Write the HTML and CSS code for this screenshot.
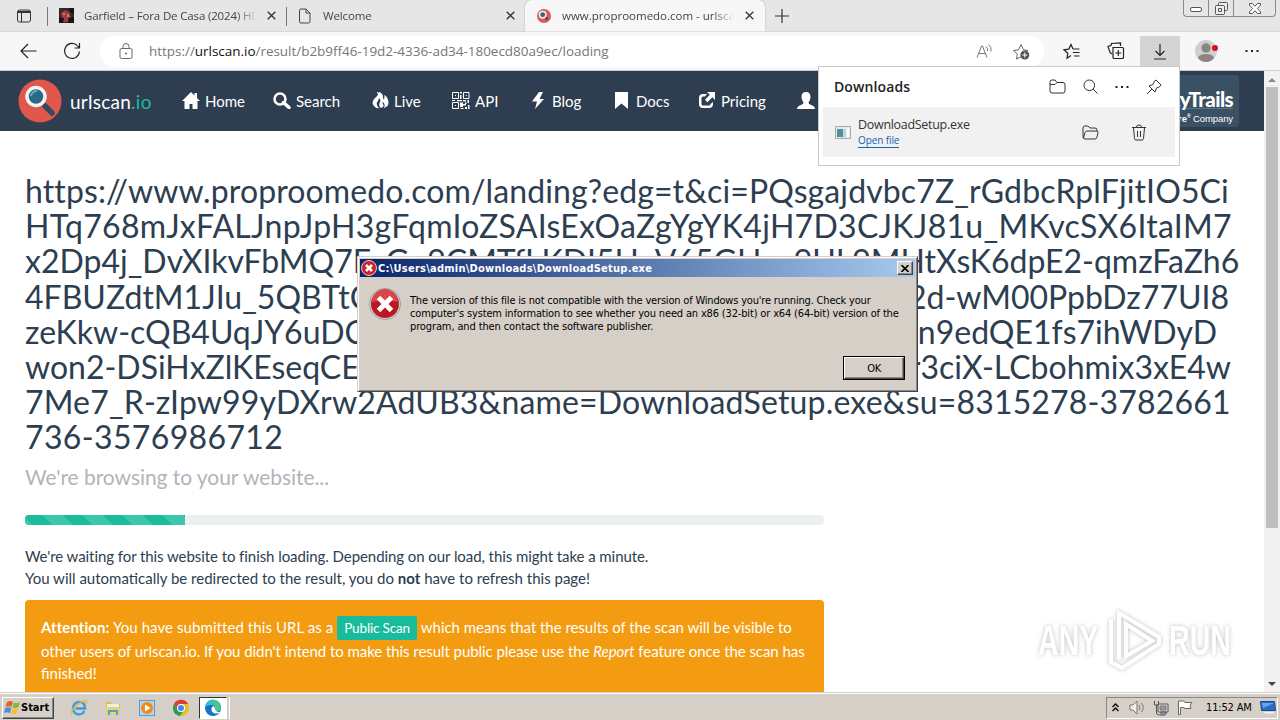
FILE: index.html
```
<!DOCTYPE html>
<html lang="en">
<head>
    <meta charset="UTF-8">
    <meta name="viewport" content="width=device-width, initial-scale=1.0">
    <title>www.proproomedo.com - urlscan.io</title>
    <link rel="stylesheet" href="styles.css">
</head>
<body>
    <div class="tabs">
        <svg class="tab-menu" width="16" height="16" viewBox="0 0 16 16"><rect x="1.5" y="2" width="13" height="12" rx="2" fill="none" stroke="#333"/><path d="M2 3h12v2H2z" fill="#333"/><path d="M5.500 5v9" stroke="#333"/></svg>
        <div class="tab tab-one">
            <svg width="15" height="15" viewBox="0 0 15 15"><path fill="#30282a" d="M0 0h15v15H0z"/><path fill="#a33b36" d="M2 5l4-3 4 2 2 5-4 5H3z"/><path fill="#151515" d="M0 9l5 1-1 5H0zM10 0h5v6l-4-2zM9 10l6-1v6h-5z"/><path fill="#d67363" d="M4 5h2v2H4zM8 6h2v3H8z"/></svg>
            <span class="tab-name">Garfield – Fora De Casa (2024) HD</span>
            <svg class="close" width="9" height="9" viewBox="0 0 9 9"><path d="M.7.7l7.600 7.600M8.300.7L.7 8.300"/></svg>
        </div>
        <div class="tab tab-two">
            <svg width="14" height="16" viewBox="0 0 14 16" fill="none" stroke="#444"><path d="M3 1h5l4 4v8.500a1.500 1.500 0 0 1-1.500 1.500H3a1.500 1.500 0 0 1-1.500-1.500v-11A1.500 1.500 0 0 1 3 1zM8 1v4h4"/></svg>
            <span class="tab-name">Welcome</span>
            <svg class="close" width="9" height="9" viewBox="0 0 9 9"><path d="M.7.7l7.600 7.600M8.300.7L.7 8.300"/></svg>
        </div>
        <div class="tab tab-three">
            <svg width="14" height="14" viewBox="0 0 44 44"><circle cx="22" cy="22" r="22" fill="#e2574c"/><path d="M24 24l9 9" stroke="#324a5e" stroke-width="7"/><circle cx="18" cy="18" r="10" fill="#2b6a7c" stroke="#eee" stroke-width="5"/></svg>
            <span class="tab-name">www.proproomedo.com - urlsca</span>
            <svg class="close" width="9" height="9" viewBox="0 0 9 9"><path d="M.7.7l7.600 7.600M8.300.7L.7 8.300"/></svg>
        </div>
        <svg class="plus" width="14" height="14" viewBox="0 0 14 14"><path d="M7 0v14M0 7h14" stroke="#333" stroke-width="1.200"/></svg>
        <div class="win-buttons">
            <span><svg width="12" height="5" viewBox="0 0 12 5"><rect x=".5" y=".5" width="11" height="4" rx="1.500" fill="#fff" stroke="#555"/></svg></span>
            <span><svg width="13" height="13" viewBox="0 0 13 13" fill="#eee" stroke="#555"><rect x="3.500" y=".5" width="9" height="8" rx="1"/><rect x=".5" y="3.500" width="9" height="9" rx="1"/><path d="M3.500 6.500h3v3h-3z"/></svg></span>
            <span><svg width="12" height="11" viewBox="0 0 12 11"><path d="M.5.5h3L6 3.300 8.500.5h3v1.700L8.300 5.500l3.200 3.200v1.800h-3L6 7.700l-2.500 2.800h-3V8.700l3.200-3.200L.5 2.200z" fill="#fff" stroke="#555"/></svg></span>
        </div>
    </div>

    <div class="toolbar">
        <svg class="back" width="17" height="16" viewBox="0 0 17 16"><path d="M16.500 8H1M8 1L1 8l7 7"/></svg>
        <svg class="reload" width="18" height="18" viewBox="0 0 18 18"><path d="M16.500 9.500a7.500 7.500 0 1 1-2-5.700l2 2M16.500 1v5h-5"/></svg>
        <div class="address">
            <svg class="lock" width="14" height="17" viewBox="0 0 14 17" fill="none" stroke="#666"><rect x="1" y="5.500" width="12" height="10" rx="1.500"/><path d="M4 5V3.500a3 3 0 0 1 6 0V5"/><path d="M6.500 10h1v1h-1z"/></svg>
            <span class="url">https://<b>urlscan.io</b>/result/b2b9ff46-19d2-4336-ad34-180ecd80a9ec/loading</span>
            <svg class="read" width="17" height="16" viewBox="0 0 17 16" fill="none" stroke="#777"><path d="M1 14.500L5.500 3h1L11 14.500M2.800 10.500h6.500M10 3.500q2 1.500 1.500 4.500M12.500 1.500q3.500 2.500 2.500 7"/></svg>
            <svg class="fav" width="18" height="17" viewBox="0 0 18 17" fill="none" stroke="#666"><path d="M9 14l-4.500 2 .8-5L1.500 7.500 6.500 6.800 9 1.500l2.500 5.300 4.500.7"/><circle cx="12.800" cy="12" r="4.500" fill="#555" stroke="none"/><path d="M12.800 9.500v5M10.300 12h5" stroke="#fff"/></svg>
        </div>
        <svg class="tool favs" width="18" height="17" viewBox="0 0 18 17"><path d="M8 12.500l-4 2.800.8-5L1 6.800l4.800-.7L8 1.500l2 4.500M10 6h6.500M10 9.500h6.500M11 13h5.500"/></svg>
        <svg class="tool" width="18" height="18" viewBox="0 0 18 18"><path d="M5 12l-2-1.500L1 4.500l3-1 .5-2 9-.5v3M6 5.500h9.500q1 0 1 1v9q0 1-1 1H7q-1 0-1-1zM11.300 8v6M8.300 11h6"/></svg>
        <div class="dl-button"><svg width="14" height="17" viewBox="0 0 14 17"><path d="M7 1v11.500M2.500 8L7 12.500 11.500 8M1 16h12"/></svg></div>
        <svg class="avatar" width="23" height="22" viewBox="0 0 23 22"><circle cx="11" cy="11" r="11" fill="#cfcfcf"/><circle cx="11" cy="8" r="4.700" fill="#8b8683"/><path d="M3 18q1-4 8-4t8 4q-3 4-8 4t-8-4z" fill="#8b8683"/><circle cx="20" cy="8" r="3" fill="#d8101c"/></svg>
        <svg class="more" width="14" height="4" viewBox="0 0 14 4"><path d="M.5 1h2v2h-2zM6 1h2v2H6zM11.500 1h2v2h-2z"/></svg>
    </div>

    <div class="view">
        <div class="page">
            <nav>
                <div class="brand">
                    <svg width="44" height="44" viewBox="0 0 44 44"><circle cx="22" cy="22" r="21.500" fill="#e2574c"/><path d="M24 24l3 3" stroke="#eee" stroke-width="3"/><path d="M27 27l7 7" stroke="#324a5e" stroke-width="5.500" stroke-linecap="round"/><circle cx="18" cy="17.500" r="9" fill="#2b6a85" stroke="#f2f2f2" stroke-width="3.500"/><path d="M13 17q1-5 6-5" fill="none" stroke="#77a8b8" stroke-width="2"/></svg>
                    <span>urlscan<i>.io</i></span>
                </div>
                <div class="links">
                    <a><svg width="18" height="17" viewBox="0 0 18 17"><path d="M9 0L0 9h2.500v8h5v-5h3v5h5V9H18l-3-3V1h-2.500v2.500z"/></svg>Home</a>
                    <a><svg width="18" height="17" viewBox="0 0 18 17"><path d="M10.500 10.500L16 15.500" stroke="#fff" stroke-width="3.500" stroke-linecap="round"/><circle cx="7" cy="7" r="5.500" fill="none" stroke="#fff" stroke-width="2.500"/></svg>Search</a>
                    <a><svg width="17" height="17" viewBox="0 0 17 17"><path d="M6 0q1 3-3 6-5 5 0 9 2 2 4 1-4-4-1-7l1-3q2 2 1 4-2 4 1 6 4-1 2-4l-1-2q4 1 2 6 6-2 4-8-1-4-4-5 1 2 0 4-1 1-1-2 0-4-4-5-2 3-2 0z"/></svg>Live</a>
                    <a><svg width="18" height="17" viewBox="0 0 18 17"><path d="M.5.5h6v6h-6zM11.500.5h5.500v6h-5.500zM.5 10.500h6v6h-6z" fill="none" stroke="#fff"/><path d="M3 3h1v1H3zM13.700 3h1v1h-1zM3 13h1v1H3zM8 0h2v1.500H8zM8 3h1.500v4H8zM0 8h3v1H0zM5 8h5v1.200H5zM11 8h3v1.500h-3zM15.500 8H17v3h-1.500zM8 10.500h3V12h3v1.500h-3V15H8zM13 10.500h1.500V12H13zM8.500 16h3v1h-3zM13 15h2v2h-2zM16 13h1.500v4H16z"/></svg>API</a>
                    <a><svg class="narrow" width="12" height="17" viewBox="0 0 12 17"><path d="M7 0L0 9.500h5L3 17l9-10H7.500L11 0z"/></svg>Blog</a>
                    <a><svg class="narrow" width="13" height="17" viewBox="0 0 13 17"><path d="M0 0h13v17l-6.500-5.500L0 17z"/></svg>Docs</a>
                    <a><svg class="share" width="17" height="17" viewBox="0 0 17 17"><path d="M9 2H5Q1 2 1 6v6q0 4 4 4h6q4 0 4-4v-2l-2.500 2q0 1.500-1.500 1.500H5q-1.500 0-1.500-1.500V6Q3.500 4.500 5 4.500h2zM9 0h8v8l-2.700-2.700-4.800 4.900-2.500-2.500 4.800-4.900z"/></svg>Pricing</a>
                    <a><svg width="18" height="17" viewBox="0 0 18 17"><path d="M9 0q4.500 0 4.500 5 0 3-2 5.500 0 1.500 2 2.200 4.500 1.300 4.500 4.300H0q0-3 4.500-4.300 2-.7 2-2.200-2-2.500-2-5.500 0-5 4.500-5z"/></svg></a>
                </div>
                <div class="trails"><strong>SecurityTrails</strong><span><b>A Recorded Future<sup>®</sup></b> Company</span></div>
            </nav>
            <div class="content">
                <h1>
                    <span class="row r1">https://www.proproomedo.com/landing?edg=t&amp;ci=PQsgajdvbc7Z_rGdbcRplFjitIO5Ci</span>
                    <span class="row r2">HTq768mJxFALJnpJpH3gFqmIoZSAIsExOaZgYgYK4jH7D3CJKJ81u_MKvcSX6ItaIM7</span>
                    <span class="row r3"><span>x2Dp4j_DvXIkvFbMQ7E_Go9CMTfLKDI5HuV65GHu</span><span>_9UL9MHtXsK6dpE2-qmzFaZh6</span></span>
                    <span class="row r4"><span>4FBUZdtM1JIu_5QBTtC</span><span>2d-wM00PpbDz77UI8</span></span>
                    <span class="row r5"><span>zeKkw-cQB4UqJY6uDC</span><span>n9edQE1fs7ihWDyD</span></span>
                    <span class="row r6"><span>won2-DSiHxZlKEseqCE</span><span>r3ciX-LCbohmix3xE4w</span></span>
                    <span class="row r7">7Me7_R-zIpw99yDXrw2AdUB3&amp;name=DownloadSetup.exe&amp;su=8315278-3782661</span>
                    <span class="row r8">736-3576986712</span>
                </h1>
                <p class="lead">We're browsing to your website...</p>
                <div class="progress"><div class="bar"></div></div>
                <p class="wait"><span>We're waiting for this website to finish loading. Depending on our load, this might take a minute.</span><br>You will automatically be redirected to the result, you do <b>not</b> have to refresh this page!</p>
                <div class="alert"><span class="intro"><b>Attention:</b> You have submitted this URL as a</span> <span class="label">Public Scan</span> <span class="means">which means that the results of the scan will be visible to</span><br><span class="users">other users of urlscan.io. If you didn't intend to make this result public please use the <em>Report</em> feature once the scan has</span><br>finished!</div>
            </div>
        </div>
        <div class="scrollbar">
            <svg width="8" height="4" viewBox="0 0 8 4"><path d="M0 4l4-4 4 4z" fill="#8a8a8a"/></svg>
            <div class="thumb"></div>
            <svg width="8" height="4" viewBox="0 0 8 4"><path d="M0 0l4 4 4-4z" fill="#444"/></svg>
        </div>
    </div>

    <div class="taskbar">
        <button class="start"><svg width="17" height="15" viewBox="0 0 17 15"><path d="M3 2q3-2 6 0L7.500 7q-3-1.500-6 0z" fill="#e8632b"/><path d="M10 2.500q3 1.500 6-.5L14.500 7q-3 2-6 .5z" fill="#7fb83a"/><path d="M1.300 8q3-1.500 6 0L6 13q-3-1.500-6 0z" fill="#4a8fd8"/><path d="M8.300 8.500q3 1.500 6-.5L13 13q-3 2-6 .5z" fill="#f8c128"/></svg>Start</button>
        <div class="apps">
            <svg width="18" height="18" viewBox="0 0 18 18"><path d="M14.500 12q-2 3.500-5.500 3.500-6-.5-6-6.500 1-6 6.500-6t5.500 6.500H5.500" fill="none" stroke="#3b9fd8" stroke-width="2.400"/><path d="M2 16q-3-2 3-8t11-6.500Q18 2 16 5" fill="none" stroke="#e3bc4b" stroke-width="1.300"/></svg>
            <svg width="18" height="18" viewBox="0 0 18 18"><path d="M2 3h5l1 2h8v11H2z" fill="#d9bd5c"/><path d="M3 5h12v4H3z" fill="#eef1dc"/><path d="M2 8h14v8H2z" fill="#ecd077"/><path d="M4 16v-5h10v5h-2v-3H6v3z" fill="#4ba3d6"/></svg>
            <svg width="18" height="18" viewBox="0 0 18 18"><rect x="1.500" y="1.500" width="15" height="15" fill="#b3d5ed" stroke="#5a9bce"/><circle cx="9" cy="9" r="6" fill="#f18a1d"/><path d="M7 5.500v7L12.500 9z" fill="#fff"/></svg>
            <svg width="18" height="18" viewBox="0 0 18 18"><circle cx="9" cy="9" r="8" fill="#eabf26"/><path d="M9 9L2 5a8 8 0 0 0 6 12l4-6z" fill="#2c9f52"/><path d="M9 9V5h7A8 8 0 0 0 2 5l3.500 5z" fill="#d93e35"/><circle cx="9" cy="9" r="4" fill="#fff"/><circle cx="9" cy="9" r="3" fill="#4285f4"/></svg>
            <div class="active-app"><svg width="18" height="18" viewBox="0 0 18 18"><circle cx="9" cy="9" r="8" fill="#1672c8"/><path d="M1 9a8 8 0 0 1 16-1q0 4-4 4-3 0-2-2 1-4-4-4-5 0-6 3z" fill="#36bdd0"/><path d="M8 1.200A8 8 0 0 1 17 8q0 4-4 4-3 0-2-2 1-3-2-5z" fill="#4fcb78" opacity=".75"/><path d="M8 8q-2 5 3 6.500 3 .5 5-1.500-4 .5-5-3 0-2-1.500-3z" fill="#fff"/></svg></div>
        </div>
        <div class="tray">
            <svg width="7" height="9" viewBox="0 0 7 9" fill="none" stroke="#111" stroke-width="1.500"><path d="M.5 4l3-3 3 3M.5 8l3-3 3 3"/></svg>
            <svg class="sound" width="17" height="15" viewBox="0 0 17 15" fill="#eee" stroke="#777"><path d="M1 5h3l4-4v13l-4-4H1z"/><path d="M10 5q2 2.500 0 5M12.500 3q3.500 4.500 0 9" fill="none"/></svg>
            <svg class="net" width="16" height="16" viewBox="0 0 16 16" fill="#ddd" stroke="#555"><path d="M5 4h10v8H5zM8 12h5v2H8z"/><path d="M1.500 1v4h4V1M3.500 5v8q0 2 3 2h6" fill="none"/><path d="M7 6h6v4H7z" fill="#999" stroke="#777"/></svg>
            <svg class="flag" width="16" height="15" viewBox="0 0 16 15" fill="#fff" stroke="#666"><path d="M1.500 14.500V1h5q1 2 4 1.500h4.500L13 5.500l1 3H8Q7 7 3.500 7.500v7z"/></svg>
            <span class="clock">11:52 AM</span>
            <svg class="desk" width="16" height="13" viewBox="0 0 16 13"><path d="M.5.5h14l1 9H1.500z" fill="#276cc7" stroke="#174b91"/><path d="M2 2h12L3 7z" fill="#62a5ec"/><path d="M4 11h9l2 1.500H5z" fill="#f3f3f3"/></svg>
        </div>
    </div>

    <!-- downloads flyout -->
    <div class="downloads">
        <div class="dl-head">
            <h2>Downloads</h2>
            <svg width="17" height="15" viewBox="0 0 17 15"><path d="M1 3q0-2 2-2h3l2 2.500h6q2 0 2 2V12q0 2-2 2H3q-2 0-2-2zM1 5.500h5l2-2"/></svg>
            <svg width="15" height="15" viewBox="0 0 15 15"><circle cx="6.300" cy="6.300" r="5.300"/><path d="M10 10l4.500 4.500"/></svg>
            <svg class="more" width="14" height="4" viewBox="0 0 14 4"><path d="M.5 1h2v2h-2zM6 1h2v2H6zM11.500 1h2v2h-2z"/></svg>
            <svg width="16" height="16" viewBox="0 0 16 16"><path d="M10 1l5 5-1 1.500-3.500 1.500L9 13 3 7l4-1.500L8.500 2zM6 10l-5 5"/></svg>
        </div>
        <div class="dl-item">
            <svg class="exe" width="16" height="14" viewBox="0 0 16 14"><path d="M.5 1.500h15v12H.5z" fill="#e6eae8" stroke="#aaa"/><path d="M2 4h6v8H2z" fill="#4e9295"/><path d="M8.500 4H11v8H8.500z" fill="#b5d2e0"/><path d="M11.500 4H14v8h-2.500z" fill="#fff"/></svg>
            <div class="dl-text"><span>DownloadSetup.exe</span><a>Open file</a></div>
            <svg class="open" width="17" height="15" viewBox="0 0 17 15"><path d="M3 14q-2 0-2-2V3q0-2 2-2h3l2 2h5q2 0 2 2v1.500M1.500 13L3 7.500Q3.500 6 5 6h9.500q1.500 0 1.500 1.500L15 12q-.5 2-2 2H3"/></svg>
            <svg class="bin" width="16" height="17" viewBox="0 0 16 17"><path d="M1 3.500h14M5.500 3q0-2 2.500-2t2.500 2M2.500 4l1 10.500q.2 1.500 1.500 1.500h6q1.300 0 1.500-1.500L13.500 4M6.500 7v6M9.500 7v6"/></svg>
        </div>
    </div>

    <!-- error message window -->
    <div class="dialog">
        <div class="title">
            <svg width="16" height="16" viewBox="0 0 32 32"><circle cx="16" cy="16" r="15" fill="#c9262b" stroke="#e0d0d0" stroke-width="2"/><path d="M10 10l12 12M22 10L10 22" stroke="#fff" stroke-width="5"/></svg>
            <span>C:\Users\admin\Downloads\DownloadSetup.exe</span>
            <button class="x"><svg width="8" height="7" viewBox="0 0 8 7"><path d="M.5 0l7 7M7.500 0l-7 7" stroke="#000" stroke-width="1.600"/></svg></button>
        </div>
        <div class="message">
            <svg width="32" height="32" viewBox="0 0 32 32"><circle cx="16" cy="16" r="15.500" fill="#ddd" stroke="#999"/><circle cx="16" cy="16" r="14" fill="#b81922"/><path d="M3 14a13 13 0 0 1 26 0q-13-3-26 0z" fill="#d9464a"/><path d="M9.500 9.500l13 13M22.500 9.500l-13 13" stroke="#fff" stroke-width="5"/></svg>
            <p><span class="m1">The version of this file is not compatible with the version of Windows you're running. Check your</span><span class="m2">computer's system information to see whether you need an x86 (32-bit) or x64 (64-bit) version of the</span><span class="m3">program, and then contact the software publisher.</span></p>
        </div>
        <button class="ok">OK</button>
    </div>

    <!-- watermark -->
    <div class="watermark">
        <span>ANY</span>
        <svg width="58" height="64" viewBox="0 0 58 64" fill="none" stroke="#fff" stroke-width="4"><path d="M12 50V4l40 24v7L15 59l-11-6V10"/><path d="M19 15v32l26-15z"/></svg>
        <span>RUN</span>
    </div>
</body>
</html>
```
FILE: styles.css
```
*{
    margin: 0;
    padding: 0;
    box-sizing: border-box;
}
body{
    width: 1280px;
    height: 720px;
    overflow: hidden;
    display: flex;
    flex-direction: column;
    position: relative;
    background-color: #fff;
    font-family: "Open Sans", "Noto Sans", sans-serif;
}
svg{
    flex-shrink: 0;
    display: block;
}
/* tabs */
.tabs{
    height: 32px;
    flex-shrink: 0;
    display: flex;
    align-items: center;
    background-color: #e6e6e6;
    border-bottom: 1px solid #d8d8d8;
    font-size: 12px;
    color: #444;
}
.tab-menu{
    margin: 0 7px 0 16px;
}
.tab{
    height: 32px;
    display: flex;
    align-items: center;
}
.tab-one{
    width: 247px;
    padding-left: 20px;
}
.tab-two{
    width: 239px;
    padding-left: 12px;
}
.tab-three{
    width: 240px;
    padding-left: 12px;
    background-color: #f7f7f7;
    border-radius: 7px 7px 0 0;
    box-shadow: 0 0 2px #aaa;
    clip-path: inset(-3px -3px 0 -3px);
}
.tab-one, .tab-two{
    background: linear-gradient(#777, #777) no-repeat 0 7px / 1px 19px;
}
.tab-one{
    background-position: 8px 7px;
}
.tab-name{
    flex: 1;
    margin-left: 11px;
    overflow: hidden;
    white-space: nowrap;
    font-size: 11.5px;
    letter-spacing: -.15px;
    -webkit-mask-image: linear-gradient(to right, #000 88%, transparent);
}
.tab-one .tab-name{
    margin-left: 10px;
}
.tab-three .tab-name{
    letter-spacing: 0;
}
.close{
    margin: 0 10px 0 11px;
    stroke: #333;
    stroke-width: 1.3;
}
.tab-one .close{
    margin: 0 10px;
}
.tab-three .close{
    margin: 0 11px;
}
.plus{
    margin-left: 10px;
}
.win-buttons{
    display: flex;
    align-self: flex-start;
    height: 17px;
    width: 93px;
    margin-left: auto;
    margin-right: 4px;
    border: 1px solid #8a8a8a;
    border-top: none;
    border-radius: 0 0 4px 4px;
}
.win-buttons span{
    flex: 25;
    display: flex;
    align-items: center;
    justify-content: center;
}
.win-buttons span:first-child{
    padding-top: 3px;
}
.win-buttons span + span{
    border-left: 1px solid #8a8a8a;
}
.win-buttons span:last-child{
    flex: 42;
}
/* toolbar */
.toolbar{
    height: 39px;
    flex-shrink: 0;
    display: flex;
    align-items: center;
    background-color: #f7f7f7;
    border-bottom: 1px solid #c3cdd3;
}
.toolbar > svg, .dl-button svg{
    fill: none;
    stroke: #222;
    stroke-width: 1.2;
}
.toolbar .more, .dl-head .more{
    fill: #222;
    stroke: none;
}
.back{
    margin-left: 20px;
}
.reload{
    margin: 0 19px 0 26px;
}
.address{
    width: 944px;
    height: 31px;
    padding: 0 14px 0 19px;
    display: flex;
    align-items: center;
    background-color: #fff;
    border-radius: 15px;
}
.url{
    flex: 1;
    margin-left: 16px;
    font-size: 13.5px;
    letter-spacing: -.03px;
    color: #777;
    white-space: nowrap;
}
.url b{
    font-weight: 400;
    color: #111;
}
.read{
    margin-right: 19px;
}
.favs{
    margin-left: 19px;
}
.favs + .tool{
    margin: 0 15px 0 26px;
}
.dl-button{
    width: 40px;
    height: 31px;
    margin-right: 15px;
    display: flex;
    align-items: center;
    justify-content: center;
    background-color: #d4d4d4;
}
.toolbar .avatar{
    margin-right: 27px;
    stroke: none;
}
/* page */
.view{
    flex: 1;
    min-height: 0;
    display: flex;
}
.page{
    width: 1264px;
    overflow: hidden;
    font-family: Lato, sans-serif;
    color: #2c3e50;
}
nav{
    height: 60px;
    padding-left: 18px;
    display: flex;
    align-items: center;
    background-color: #2e3d50;
    color: #fff;
}
.brand{
    width: 164px;
    display: flex;
    align-items: center;
    gap: 8px;
    font-size: 19px;
    letter-spacing: .25px;
}
.brand i{
    font-style: normal;
    color: #1abc9c;
}
.links{
    display: grid;
    grid-template-columns: 91px 99px 80px 80px 83px 83px 99px 20px;
    font-size: 15px;
    fill: #fff;
}
.links a{
    display: flex;
    align-items: center;
    gap: 5px;
}
.links svg{
    margin-top: -2px;
}
.links .narrow{
    margin-right: 3px;
}
.links .share{
    margin-right: 1px;
}
.trails{
    width: 130px;
    height: 52px;
    margin-left: auto;
    margin-right: 25px;
    padding: 12px 6px 0 0;
    display: flex;
    flex-direction: column;
    align-items: flex-end;
    white-space: nowrap;
    background-color: #3a5163;
    border-radius: 3px;
    font-family: "Liberation Sans", sans-serif;
}
.trails strong{
    height: 22px;
    border-bottom: 1px solid #5a7587;
    font: 900 20.5px/24px Lato, sans-serif;
    letter-spacing: -.6px;
}
.trails span{
    font-size: 9.5px;
    line-height: 14px;
    letter-spacing: -.1px;
}
.trails sup{
    font-size: 5px;
}
.content{
    padding: 42px 25px 0;
}
h1{
    font-size: 32px;
    font-weight: 400;
    line-height: 35.2px;
}
.row{
    display: flex;
    justify-content: space-between;
    white-space: nowrap;
}
.r1{
    letter-spacing: .11px;
}
.r2{
    letter-spacing: .28px;
}
.r3{
    width: 1213px;
}
.r4{
    width: 1204px;
}
.r5{
    width: 1192px;
}
.r6{
    width: 1206px;
}
.r7{
    letter-spacing: .17px;
}
.r8{
    letter-spacing: .36px;
}
.lead{
    margin-top: 7px;
    font-size: 21px;
    letter-spacing: -.05px;
    line-height: 30px;
    color: #b0b5b8;
}
.progress{
    width: 799px;
    height: 10px;
    margin-top: 23px;
    background-color: #ecf0f1;
    border-radius: 4px;
    overflow: hidden;
}
.bar{
    width: 160px;
    height: 10px;
    background: linear-gradient(45deg, rgba(255,255,255,.15) 25%, transparent 25%, transparent 50%, rgba(255,255,255,.15) 50%, rgba(255,255,255,.15) 75%, transparent 75%) 18px 0 / 40px 40px #1abc9c;
}
.wait{
    margin-top: 20px;
    font-size: 15px;
    line-height: 22px;
    white-space: nowrap;
}
.wait span{
    letter-spacing: -.07px;
}
.alert{
    width: 799px;
    height: 120px;
    margin-top: 11px;
    padding: 16px;
    background-color: #f39c12;
    border-radius: 4px;
    color: #fff;
    font-size: 15px;
    line-height: 22.5px;
    white-space: nowrap;
}
.intro{
    letter-spacing: .08px;
}
.means{
    letter-spacing: -.04px;
}
.users{
    letter-spacing: -.06px;
}
.label{
    display: inline-block;
    padding: 0 7px;
    height: 24px;
    line-height: 24px;
    background-color: #18bc9c;
    border-radius: 2px;
    font-size: 13.5px;
    letter-spacing: -.15px;
}
.scrollbar{
    width: 16px;
    padding: 7px 2px 6px;
    display: flex;
    flex-direction: column;
    align-items: center;
    background-color: #f1f1f1;
}
.thumb{
    width: 12px;
    height: 441px;
    margin: 5px 0 auto;
    background-color: #bfbfbf;
}
/* taskbar */
.taskbar{
    height: 28px;
    flex-shrink: 0;
    display: flex;
    align-items: center;
    padding: 2px 2px 0;
    background-color: #d5cfc8;
    border-top: 1px solid #d5cfc8;
    box-shadow: inset 0 1px #fff;
    font-family: "DejaVu Sans Condensed", "DejaVu Sans", sans-serif;
}
.start{
    width: 52px;
    height: 22px;
    display: flex;
    align-items: center;
    padding-left: 1px;
    background-color: #d5cfc8;
    border: 1px solid;
    border-color: #fff #444 #444 #fff;
    box-shadow: inset -1px -1px #888;
    font: bold 11px "DejaVu Sans Condensed", "DejaVu Sans", sans-serif;
}
.apps{
    display: flex;
    align-items: center;
    gap: 16px;
    margin-left: 16px;
}
.active-app{
    width: 28px;
    height: 22px;
    margin-left: -7px;
    padding: 1px 0 0 4px;
    background-color: #fff;
    border: 1px solid;
    border-color: #333 #fff #fff #333;
    box-shadow: 2px 0 #d5cfc8, 3px 0 #fff;
}
.tray{
    width: 172px;
    height: 22px;
    margin-left: auto;
    display: flex;
    align-items: center;
    padding-left: 5px;
    border: 1px solid;
    border-color: #888 #fff #fff #888;
    font-size: 11px;
}
.sound{
    margin: 0 7px 0 10px;
}
.net{
    margin-right: 8px;
}
.clock{
    width: 54px;
    white-space: nowrap;
    margin-left: 13px;
    letter-spacing: -.15px;
}
/* downloads */
.downloads{
    position: absolute;
    left: 818px;
    top: 66px;
    width: 362px;
    height: 100px;
    background-color: #fff;
    border: 1px solid #c8c8c8;
}
.dl-head{
    height: 40px;
    padding: 0 17px 1px 15px;
    display: flex;
    align-items: center;
    gap: 17px;
}
.dl-head svg, .open, .bin{
    fill: none;
    stroke: #333;
}
h2{
    flex: 1;
    font-size: 14px;
    font-weight: 600;
    letter-spacing: .1px;
    color: #222;
}
.dl-item{
    height: 50px;
    margin: 0 4px;
    padding: 0 28px 0 12px;
    display: flex;
    align-items: center;
    background-color: #f1f1f1;
}
.dl-text{
    flex: 1;
    margin-left: 7px;
    font-size: 12.5px;
    letter-spacing: -.3px;
    line-height: 17px;
    color: #333;
}
.dl-text span{
    display: block;
}
.dl-text a{
    display: block;
    width: 41px;
    height: 15px;
    white-space: nowrap;
    font-size: 10px;
    letter-spacing: -.1px;
    line-height: 14px;
    color: #1864ab;
    border-bottom: 1px solid #1864ab;
}
.bin{
    margin-left: 32px;
}
/* dialog */
.dialog{
    position: absolute;
    left: 357px;
    top: 256px;
    width: 561px;
    height: 136px;
    padding: 2px;
    background-color: #d5cfc8;
    border: 1px solid;
    border-color: #d5cfc8 #444 #444 #d5cfc8;
    box-shadow: inset 1px 1px #fff, inset -1px -1px #888;
    font-family: "DejaVu Sans Condensed", "DejaVu Sans", sans-serif;
    font-size: 11px;
}
.title{
    height: 18px;
    display: flex;
    align-items: center;
    padding: 0 2px 0 1px;
    background: linear-gradient(to right, #0a246a, #a6caf0);
    color: #fff;
    font-weight: bold;
}
.title span{
    flex: 1;
    margin-left: 1px;
    letter-spacing: .24px;
    white-space: nowrap;
}
.x, .ok{
    display: flex;
    align-items: center;
    justify-content: center;
    background-color: #d5cfc8;
    border: 1px solid;
    border-color: #fff #444 #444 #fff;
    box-shadow: inset -1px -1px #888;
}
.x{
    width: 16px;
    height: 14px;
}
.message{
    display: flex;
    padding: 11px 0 0 9px;
}
.message p{
    margin: 6px 0 0 9px;
    line-height: 13px;
    white-space: nowrap;
}
.message p span{
    display: block;
}
.m1{
    letter-spacing: -.19px;
}
.m2{
    letter-spacing: -.16px;
}
.m3{
    letter-spacing: -.12px;
}
.ok{
    width: 60px;
    height: 22px;
    margin: 24px 0 0 484px;
    outline: 1px solid #000;
    font: 11px "DejaVu Sans Condensed", "DejaVu Sans", sans-serif;
    letter-spacing: -.4px;
}
/* watermark */
.watermark{
    position: absolute;
    left: 1038px;
    top: 608px;
    width: 195px;
    height: 66px;
    display: flex;
    align-items: center;
    justify-content: space-between;
    color: #fff;
    font: bold 42px "Liberation Sans", sans-serif;
    filter: drop-shadow(0 0 2px rgba(0, 0, 0, .25));
}
.watermark span{
    width: 64px;
    transform: scaleX(.68);
    transform-origin: left;
}
```
